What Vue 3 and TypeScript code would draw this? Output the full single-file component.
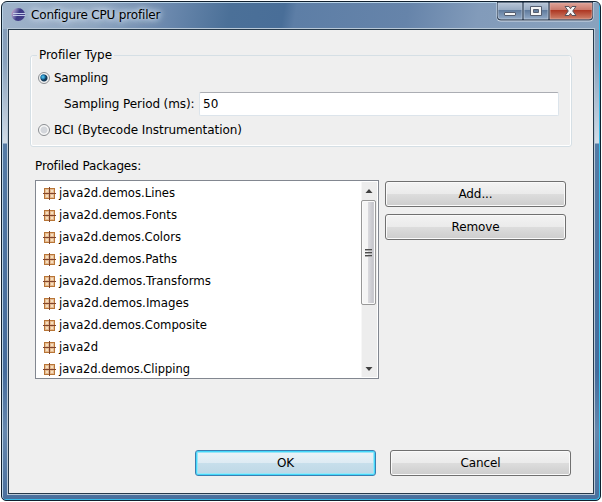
<script setup lang="ts">
import { ref } from 'vue'

const packages: { name: string; width: number }[] = [
  { name: 'java2d.demos.Lines', width: 116 },
  { name: 'java2d.demos.Fonts', width: 118 },
  { name: 'java2d.demos.Colors', width: 122 },
  { name: 'java2d.demos.Paths', width: 118 },
  { name: 'java2d.demos.Transforms', width: 152 },
  { name: 'java2d.demos.Images', width: 130 },
  { name: 'java2d.demos.Composite', width: 148 },
  { name: 'java2d', width: 39 },
  { name: 'java2d.demos.Clipping', width: 131 },
]
const mode = ref<'sampling' | 'bci'>('sampling')
const period = ref('50')
</script>

<template>
  <div class="window">
    <header class="titlebar">
      <svg class="logo" width="15" height="15" viewBox="0 0 15 15">
        <defs>
          <linearGradient id="orb" x1="0" x2="1" y1="0" y2="0.4">
            <stop offset="0" stop-color="#e8a8c0" />
            <stop offset=".3" stop-color="#9088bc" />
            <stop offset=".6" stop-color="#3c3a86" />
            <stop offset="1" stop-color="#443e88" />
          </linearGradient>
        </defs>
        <ellipse cx="7.2" cy="7.5" rx="6.8" ry="6.5" fill="url(#orb)" />
        <path d="M2 6.500H14.500M2 8.500H14.500" stroke="#c3cbe8" stroke-width="1" />
      </svg>
      <h1><span>Configure CPU profiler</span></h1>
      <div class="controls">
        <svg width="98" height="20" viewBox="0 0 98 20">
          <defs>
            <linearGradient id="glass" x2="0" y2="1">
              <stop offset="0" stop-color="#b6c4d6" />
              <stop offset=".45" stop-color="#96a9c1" />
              <stop offset=".46" stop-color="#607b9d" />
              <stop offset="1" stop-color="#91a9c6" />
            </linearGradient>
            <linearGradient id="close" x2="0" y2="1">
              <stop offset="0" stop-color="#dfa297" />
              <stop offset=".45" stop-color="#c9786a" />
              <stop offset=".46" stop-color="#ae3723" />
              <stop offset="1" stop-color="#cd8069" />
            </linearGradient>
          </defs>
          <path d="M.5 0V15Q.5 19.5 5 19.5H93Q97.500 19.500 97.500 15V0" fill="#d2dce8" />
          <path d="M1 0V15Q1 18.500 5 18.500H93Q97 18.500 97 15V0Z" fill="#35455b" />
          <path d="M2 1H26V17H5Q2 17 2 14Z" fill="url(#glass)" stroke="#c3cfdd" stroke-width=".7" />
          <path d="M28 1H52V17H28Z" fill="url(#glass)" stroke="#c3cfdd" stroke-width=".7" />
          <path d="M54 1H96V14Q96 17 93 17H54Z" fill="url(#close)" stroke="#e1b3aa" stroke-width=".7" />
          <rect x="8.500" y="10.500" width="11" height="3" rx=".5" fill="#f5f5f5" stroke="#555e70" />
          <path fill-rule="evenodd" d="M34.500 4.500H45.500V13.500H34.500ZM37.500 7.500H42.500V10.500H37.500Z" fill="#f5f5f5" stroke="#555e70" />
          <path d="M69 4.500H73L74.500 6.700L76 4.500H80L76.700 9L80 13.500H76L74.500 11.300L73 13.500H69L72.300 9Z" fill="#f5f5f5" stroke="#59535b" />
        </svg>
      </div>
    </header>

    <main class="client">
      <fieldset class="group">
        <legend><span class="t-type">Profiler Type</span></legend>
        <label class="radio-row">
          <input v-model="mode" type="radio" value="sampling" /><span class="t-sampling">Sampling</span>
        </label>
        <div class="period-row">
          <label for="period" class="t-period">Sampling Period (ms):</label>
          <input id="period" v-model="period" type="text" />
        </div>
        <label class="radio-row bci">
          <input v-model="mode" type="radio" value="bci" /><span class="t-bci">BCI (Bytecode Instrumentation)</span>
        </label>
      </fieldset>

      <div class="caption"><span>Profiled Packages:</span></div>
      <section class="package-area">
        <div class="listbox">
          <ul>
            <li v-for="pkg in packages" :key="pkg.name">
              <svg width="13" height="13" viewBox="0 0 13 13" shape-rendering="crispEdges">
                <rect x="1" y="1" width="11" height="11" fill="#b87536" />
                <rect x="2" y="2" width="9" height="9" fill="#e6bb90" />
                <path d="M3 3H5V5H3ZM8 3H10V5H8ZM3 8H5V10H3ZM8 8H10V10H8Z" fill="#f5dfc2" />
                <path d="M6 0H7V13H6ZM0 6H13V7H0Z" fill="#80452e" />
              </svg>
              <svg class="package-name" :width="pkg.width + 2" height="22">
                <text x="0" y="15" :textLength="pkg.width" lengthAdjust="spacingAndGlyphs">{{ pkg.name }}</text>
              </svg>
            </li>
          </ul>
          <div class="scrollbar">
            <svg width="16" height="17" viewBox="0 0 16 17"><path d="M4.500 11L8 7L11.500 11Z" fill="#404040" /></svg>
            <div class="thumb"><i></i><i></i><i></i></div>
            <svg class="down" width="16" height="17" viewBox="0 0 16 17"><path d="M4.500 7L8 11L11.500 7Z" fill="#404040" /></svg>
          </div>
        </div>
        <div class="side">
          <button><span>Add...</span></button>
          <button><span>Remove</span></button>
        </div>
      </section>

      <footer>
        <button class="default"><span>OK</span></button>
        <button><span>Cancel</span></button>
      </footer>
    </main>
  </div>
</template>

<style>
body { background: #fff; }
</style>

<style scoped>
* { box-sizing: border-box; }
.window {
  width: 600px; height: 500px; margin: 1px; padding: 0 5px 4px 6px;
  border: 1px solid #10202f; border-radius: 6px 6px 5px 5px;
  font: 12px/16px "DejaVu Sans", sans-serif; color: #000; overflow: hidden;
  box-shadow: inset 1px 1px #b9d3e7, inset -1px -1px #39bce9;
  background: linear-gradient(180deg, #8199b6 0, #89a2bd 60px, #d2dce7 141px, #557ba5 142px, #456c9c 370px, #6688ae 430px, #496f9d 100%);
}
.titlebar {
  height: 26px; margin: 1px -4px 0 -5px; padding: 0 0 0 8px; display: flex; align-items: flex-start;
  background: linear-gradient(100deg, #9fb3ca 0, #8fa6c1 90px, #6a88ad 165px, #4b7098 225px, #496e98 278px, #5d7ea6 290px, #6684aa 400px, #829bba 470px, #89a2bd 100%);
}
.logo { margin-top: 4px; }
h1 { margin: 4px 0 0 5px; flex: 1; font-size: 12px; font-weight: 400; line-height: 16px; white-space: nowrap; }
h1 span { display: inline-block; letter-spacing: -.17px; text-shadow: 0 0 5px #d8e4f2, 0 0 7px #d8e4f2, 0 0 10px #d8e4f2; }
.controls { height: 20px; margin-right: 5px; margin-top: -1px; }
.controls svg { display: block; }
.client {
  width: 586px; height: 465px; padding: 18px 21px 0; background: #efefef;
  border: 1px solid #26394a; box-shadow: 0 0 0 1px #b8c8d7;
}
.group {
  margin: 0; width: 542px; height: 99px; padding: 8px 12px 0 7px; border: 1px solid #d5dfe5;
  border-radius: 3px; box-shadow: inset 0 -1px #fff, inset -1px 0 #fff, inset 1px 0 #fff;
}
.group legend { padding: 0 2px; height: 14px; margin-left: -1px; line-height: 14px; white-space: nowrap; }
.t-type { letter-spacing: -.05px; }
.radio-row { display: flex; align-items: center; height: 16px; white-space: nowrap; }
input[type='radio'] {
  appearance: none; margin: 0 4px 0 0; width: 12px; height: 12px; border: 1px solid #8b8e92;
  border-radius: 50%; background: radial-gradient(circle, #d3d6db 0 3px, #f8f8f8 4px);
}
input[type='radio']:checked {
  background: radial-gradient(circle at 4px 4px, #62d2f6 0, #1d7bb1 2px, transparent 3px), radial-gradient(circle, #143b59 0 3px, #f2f2f2 4px);
}
.t-sampling { letter-spacing: -.25px; }
.period-row { display: flex; align-items: center; height: 24px; margin: 6px 0 6px 26px; }
.t-period { width: 135px; letter-spacing: -.1px; white-space: nowrap; }
input[type='text'] {
  flex: 1; min-width: 0; height: 24px; padding: 0 4px 0 3px; font: inherit; background: #fff;
  border: 1px solid #dce4eb; border-top-color: #abadb3; border-radius: 2px; outline: none;
}
.t-bci { letter-spacing: -.06px; }
.caption { height: 33px; padding: 11px 0 0 5px; line-height: 16px; }
.caption span { letter-spacing: -.15px; }
.package-area { display: flex; gap: 6px; padding-left: 5px; }
.listbox { display: flex; width: 344px; height: 199px; border: 1px solid #828790; background: #fff; padding: 1px; overflow: hidden; }
ul { list-style: none; margin: 0; padding: 0 0 0 6px; flex: 1; }
li { display: flex; height: 22px; align-items: center; }
li > svg:first-child { margin-top: 1px; }
.package-name { display: block; margin-left: 3px; overflow: visible; }
.scrollbar { width: 16px; height: 195px; display: flex; flex-direction: column; background: #ededed; box-shadow: inset 1px 0 #f7f7f7; }
.scrollbar svg { display: block; flex: none; }
.thumb {
  width: 15px; height: 105px; margin-top: 1px; display: flex; flex-direction: column; align-items: center; justify-content: center; gap: 1px;
  border: 1px solid #979797; border-radius: 2px; box-shadow: inset 0 0 0 1px #fafafa;
  background: linear-gradient(90deg, #f5f5f5 0 45%, #dadade 48%, #c6c6cc 85%, #dcdcdc);
}
.thumb i { width: 7px; height: 2px; border-top: 1px solid #4d4d4d; border-bottom: 1px solid #aaa; }
.down { margin-top: auto; }
.side { display: flex; flex-direction: column; gap: 7px; padding-top: 1px; }
button {
  width: 181px; height: 26px; padding: 0; border: 1px solid #707070; border-radius: 3px;
  box-shadow: inset 0 0 0 1px #fafafa; font: inherit; line-height: 23px; color: #000;
  background: linear-gradient(#f3f3f3 0, #ebebeb 48%, #dddddd 50%, #cdcdcd 100%);
}
button span { letter-spacing: -.1px; }
button.default {
  border-color: #3c7fb1; box-shadow: inset 0 0 0 1px #45d8fb, inset 0 0 0 2px #9be5f6;
  background: linear-gradient(#edf4f8 0, #deebf3 48%, #c7dfeb 50%, #bdd7e6 100%);
}
footer { display: flex; gap: 14px; margin: 71px 0 0 165px; }
</style>
